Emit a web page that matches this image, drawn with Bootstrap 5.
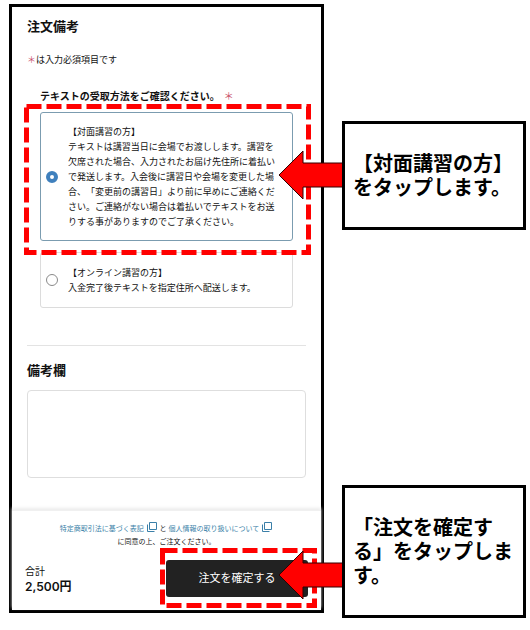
<!DOCTYPE html>
<html lang="ja">
<head>
<meta charset="utf-8">
<meta name="viewport" content="width=device-width, initial-scale=1">
<title>注文備考</title>
<link href="https://cdn.jsdelivr.net/npm/bootstrap@5.3.0/dist/css/bootstrap.min.css" rel="stylesheet">
<style>
  body { font-family: Inter, "Noto Sans CJK JP", sans-serif; color: #111; background: #fff; padding: 4px 4px 4px 9px; text-spacing-trim: space-all; }
  .guide { display: grid; grid-template-columns: 315fr 184fr; column-gap: 18px; align-items: start; }
  .phone { border: 3px solid #000; }
  .order-body { padding: 11px 15px 32px; }
  .heading { font-size: 13px; line-height: 16px; font-weight: 700; margin: 0; }
  .note { font-size: 9px; line-height: 14px; margin: 19px 0 21px; }
  .req { color: #c8506a; font-weight: 400; }
  .choices { margin: 0 13px 37px; }
  .choices legend { font-size: 10px; line-height: 16px; font-weight: 700; margin: 0 0 8px; white-space: nowrap; }
  .choices legend .req { margin-left: 4px; }
  .option { border: 1px solid #dcdcdc; border-radius: 3px; padding: 12px 11px 12px 5px; gap: 10px; font-size: 9px; line-height: 15px; }
  .option.chosen { border-color: #7b9cb0; padding-top: 11px; padding-bottom: 11px; }
  .option.other { margin-top: 11px; }
  .option .form-check-input { width: 12px; height: 12px; margin: 0; border: 1px solid #8a8a8a; box-shadow: none; }
  .option .form-check-input:checked { border: 4px solid #3f80bd; background: #fff; }
  .memo { border-top: 1px solid #e3e3e3; padding-top: 15px; }
  .memo label { font-size: 13px; line-height: 18px; font-weight: 700; margin-bottom: 11px; }
  .memo textarea { height: 88px; border: 1px solid #dedede; border-radius: 4px; resize: none; display: block; }
  .order-foot { padding: 11px 13px 13px; border-top: 1px solid #f0f0f0; box-shadow: 0 -2px 3px #ececec; }
  .terms { font-size: 7px; line-height: 13px; margin: 0 0 12px; }
  .terms a { color: #3a7fa8; text-decoration: none; }
  .terms svg { width: 10px; height: 10px; vertical-align: -1px; margin: 0 1px; }
  .sum-label { font-size: 10px; line-height: 16px; }
  .sum { font-size: 12px; line-height: 16px; font-weight: 600; }
  .confirm { background: #222; color: #fff; font-size: 11px; line-height: 17px; padding: 10px 30px; border: 0; border-radius: 3px; width: 142px; }
  .confirm:hover { background: #333; color: #fff; }
  .marked { position: relative; }
  .dashes { position: absolute; z-index: 2; pointer-events: none; }
  .dashes rect { x: 2.5px; y: 2.5px; width: calc(100% - 5px); height: calc(100% - 5px); fill: none; stroke: #f00; stroke-width: 5; stroke-dasharray: 15 5; }
  .dashes-option { left: -16px; top: -8px; width: calc(100% + 34px); height: calc(100% + 22px); }
  .dashes-confirm { left: -6px; top: -12px; width: calc(100% + 15px); height: calc(100% + 23px); }
  .callout { position: relative; border: 3px solid #000; background: #fff; padding: 27px 6px 28px 8px; font-family: "Noto Sans CJK JP", sans-serif; font-size: 20px; line-height: 24px; font-weight: 700; color: #000; }
  .callout p { margin: 0; }
  .callout-option { margin-top: 117px; }
  .callout-confirm { margin-top: 255px; }
  .arrow { position: absolute; right: calc(100% + 3px); width: 64px; height: 50px; z-index: 3; }
  .arrow-option { top: 26px; }
  .arrow-confirm { bottom: 15px; }
</style>
<script src="https://cdn.jsdelivr.net/npm/bootstrap@5.3.0/dist/js/bootstrap.bundle.min.js"></script>
</head>
<body>
<main class="guide">
  <form class="phone">
    <div class="order-body">
      <h1 class="heading">注文備考</h1>
      <p class="note"><span class="req">＊</span>は入力必須項目です</p>
      <fieldset class="choices">
        <legend>テキストの受取方法をご確認ください。<span class="req">＊</span></legend>
        <div class="marked">
          <div class="option chosen d-flex align-items-center">
            <input class="form-check-input flex-shrink-0" type="radio" name="receive" id="face" checked>
            <label for="face">【対面講習の方】<br>テキストは講習当日に会場でお渡しします。講習を欠席された場合、入力されたお届け先住所に着払いで発送します。入会後に講習日や会場を変更した場合、「変更前の講習日」より前に早めにご連絡ください。ご連絡がない場合は着払いでテキストをお送りする事がありますのでご了承ください。</label>
          </div>
          <svg class="dashes dashes-option" aria-hidden="true"><rect/></svg>
        </div>
        <div class="option other d-flex align-items-center">
          <input class="form-check-input flex-shrink-0" type="radio" name="receive" id="online">
          <label for="online">【オンライン講習の方】<br>入金完了後テキストを指定住所へ配送します。</label>
        </div>
      </fieldset>
      <div class="memo">
        <label for="memo" class="d-block">備考欄</label>
        <textarea id="memo" class="form-control"></textarea>
      </div>
    </div>
    <div class="order-foot">
      <p class="terms text-center"><a href="#">特定商取引法に基づく表記 <svg viewBox="0 0 10 10" fill="none" stroke="currentColor"><path d="M2.5.5h7v7h-7zM.5 2.5v7h7"/></svg></a> と <a href="#">個人情報の取り扱いについて <svg viewBox="0 0 10 10" fill="none" stroke="currentColor"><path d="M2.5.5h7v7h-7zM.5 2.5v7h7"/></svg></a><br>に同意の上、ご注文ください。</p>
      <div class="d-flex justify-content-between align-items-center">
        <div>
          <div class="sum-label">合計</div>
          <div class="sum">2,500円</div>
        </div>
        <div class="marked">
          <button type="button" class="btn confirm d-block">注文を確定する</button>
          <svg class="dashes dashes-confirm" aria-hidden="true"><rect/></svg>
        </div>
      </div>
    </div>
  </form>
  <div>
    <aside class="callout callout-option">
      <p>【対面講習の方】をタップします。</p>
      <svg class="arrow arrow-option" viewBox="0 0 64 50" aria-hidden="true"><path d="M1 25 25 1V13H65V37H25V49Z" fill="#f00" stroke="#300" stroke-width="1"/></svg>
    </aside>
    <aside class="callout callout-confirm">
      <p>「注文を確定する」をタップします。</p>
      <svg class="arrow arrow-confirm" viewBox="0 0 64 50" aria-hidden="true"><path d="M1 25 25 1V13H65V37H25V49Z" fill="#f00" stroke="#300" stroke-width="1"/></svg>
    </aside>
  </div>
</main>
</body>
</html>
